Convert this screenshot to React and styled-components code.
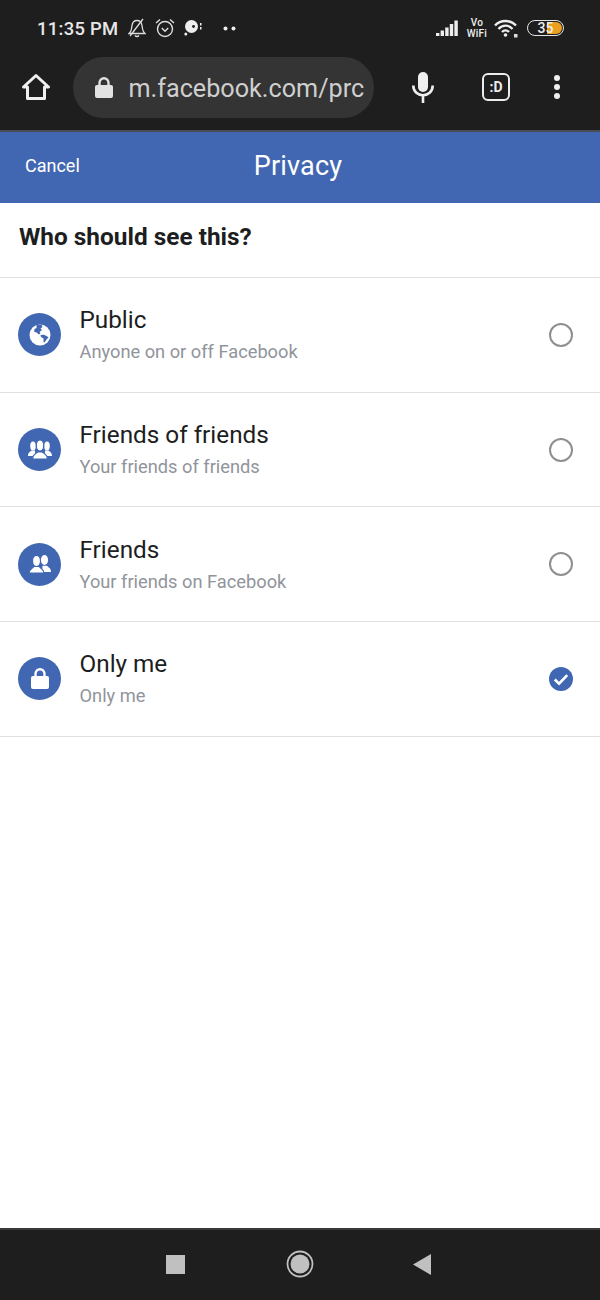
import React from 'react';
import styled, { createGlobalStyle } from 'styled-components';

const GlobalStyle = createGlobalStyle`
  html, body {
    margin: 0;
    padding: 0;
    background: #fff;
  }
  * {
    box-sizing: border-box;
  }
`;

const Page = styled.div`
  width: 600px;
  height: 1300px;
  display: flex;
  flex-direction: column;
  font-family: Roboto, 'Liberation Sans', sans-serif;
  background: #fff;
  overflow: hidden;
`;

const Chrome = styled.div`
  height: 132px;
  background: #1e1e1e;
  border-bottom: 2px solid #4a4d55;
  flex-shrink: 0;
`;

const StatusBar = styled.div`
  height: 56px;
  padding: 0 36px 0 37px;
  display: flex;
  align-items: center;
  justify-content: space-between;
  color: #e8e8e8;
`;

const StatusGroup = styled.div`
  display: flex;
  align-items: center;
`;

const Clock = styled.span`
  font-size: 18.4px;
  font-weight: 500;
  letter-spacing: 0.3px;
  margin-right: 10px;
`;

const StatusIcon = styled.svg`
  display: block;
  margin-right: ${p => p.$gap || 0}px;
  flex-shrink: 0;
`;

const VoWifi = styled.div`
  font-size: 10px;
  font-weight: 500;
  line-height: 11px;
  text-align: center;
  margin: 0 7px 0 8px;
  color: #eee;
  letter-spacing: 0.2px;
`;

const Battery = styled.div`
  width: 37px;
  height: 16px;
  margin-left: 9px;
  border: 1.5px solid #e4e4e4;
  border-radius: 8px;
  display: flex;
  align-items: center;
  justify-content: center;
  position: relative;
  overflow: hidden;
  font-size: 14px;
  font-weight: 500;
  color: #eee;
`;

const BatteryFill = styled.div`
  position: absolute;
  top: 1px;
  bottom: 1px;
  left: 19px;
  width: 15px;
  background: #e9a020;
  border-radius: 0 6px 6px 0;
`;

const BatteryText = styled.span`
  position: relative;
`;

const Toolbar = styled.div`
  height: 74px;
  padding: 0 0 12px 22px;
  display: flex;
  align-items: center;
`;

const UrlPill = styled.div`
  width: 301px;
  height: 61px;
  margin-left: 23px;
  margin-right: 38px;
  padding: 0 0 0 22px;
  border-radius: 31px;
  background: #343434;
  display: flex;
  align-items: center;
  flex-shrink: 0;
`;

const UrlText = styled.span`
  margin-left: 15.5px;
  margin-top: 3px;
  font-size: 25.2px;
  color: #cfcfcf;
  white-space: nowrap;
`;

const ToolIcons = styled.div`
  display: flex;
  align-items: center;
`;

const TabBadge = styled.div`
  width: 28px;
  height: 28px;
  margin: 0 43px 0 48px;
  border: 2.5px solid #ececec;
  border-radius: 6px;
  display: flex;
  align-items: center;
  justify-content: center;
  color: #ececec;
  font-size: 14px;
  font-weight: 700;
  flex-shrink: 0;
`;

const HeaderBar = styled.header`
  height: 71px;
  background: #4267b2;
  display: grid;
  grid-template-columns: 1fr auto 1fr;
  align-items: center;
  padding: 0 25px 3px 25px;
  color: #fff;
  flex-shrink: 0;
`;

const Cancel = styled.span`
  font-size: 18px;
  margin-bottom: 2px;
`;

const Title = styled.h1`
  margin: 0 4px 0 0;
  font-size: 27px;
  font-weight: 400;
  letter-spacing: 0.2px;
`;

const Question = styled.div`
  height: 75px;
  padding: 0 0 7px 19px;
  display: flex;
  align-items: center;
  font-size: 24.4px;
  font-weight: 700;
  color: #1c1e21;
  border-bottom: 1.5px solid #e1e1e1;
  flex-shrink: 0;
`;

const Row = styled.div`
  height: 114.7px;
  padding: 0 27px 0 18px;
  display: flex;
  align-items: center;
  border-bottom: 1.5px solid #e1e1e1;
  flex-shrink: 0;
`;

const Badge = styled.div`
  width: 43px;
  height: 43px;
  border-radius: 50%;
  background: #4267b2;
  display: flex;
  align-items: center;
  justify-content: center;
  flex-shrink: 0;
`;

const RowText = styled.div`
  flex: 1;
  margin-left: 18.5px;
`;

const RowTitle = styled.div`
  font-size: 24.3px;
  line-height: 32px;
  color: #1c1e21;
`;

const RowSub = styled.div`
  margin-top: 3px;
  font-size: 18.25px;
  line-height: 26px;
  color: #90949c;
`;

const Radio = styled.div`
  width: 24px;
  height: 24px;
  border-radius: 50%;
  border: 2.5px solid #8f8f8f;
  flex-shrink: 0;
`;

const CheckMark = styled.svg`
  display: block;
  flex-shrink: 0;
`;

const Spacer = styled.div`
  flex: 1;
`;

const NavBar = styled.nav`
  height: 72px;
  background: #1e1e1e;
  border-top: 2px solid #3a3a3a;
  display: flex;
  align-items: center;
  padding: 0 0 2px 166px;
  flex-shrink: 0;
`;

const NavSquare = styled.div`
  width: 19px;
  height: 19px;
  background: #c0c0c0;
  margin-right: 101px;
`;

const NavBack = styled.svg`
  display: block;
  margin-left: 99px;
`;

const GlobeIcon = () => (
  <svg width="22" height="22" viewBox="0 0 22 22">
    <circle cx="11" cy="11" r="10.5" fill="#fff" />
    <path
      d="M7.5 1 L12.5 0.8 L13.5 3 L11.5 4.5 L13 6 L10.5 8 L11.5 9.5 L10 10.5 L7.5 8.5 L5 7.5 L5.5 5 L7.5 4Z"
      fill="#4267b2"
    />
    <path
      d="M11.5 11 L15 10.8 L18 12.2 L19.5 13.5 L17.5 15.5 L15.5 18.5 L14.5 18 L14.5 14.5 L12 13Z"
      fill="#4267b2"
    />
  </svg>
);

const GroupIcon = () => (
  <svg width="24" height="19" viewBox="0 0 24 19" fill="#fff">
    <ellipse cx="5" cy="6" rx="2.8" ry="4.5" />
    <ellipse cx="19" cy="6" rx="2.8" ry="4.5" />
    <path d="M0 16 C0 12.5 2 12 3.5 10.5 L7 10.5 L7 16Z" />
    <path d="M24 16 C24 12.5 22 12 20.5 10.5 L17 10.5 L17 16Z" />
    <ellipse cx="12" cy="5.5" rx="3.7" ry="5.5" stroke="#4267b2" strokeWidth="1.2" />
    <path
      d="M4.5 19 C4.5 14.5 7.5 14 9.5 12 L14.5 12 C16.5 14 19.5 14.5 19.5 19Z"
      stroke="#4267b2"
      strokeWidth="1.2"
    />
  </svg>
);

const PairIcon = () => (
  <svg width="22" height="18" viewBox="0 0 22 18" fill="#fff">
    <ellipse cx="15.5" cy="5" rx="3.6" ry="5" />
    <path d="M13 17 L22 17 C22 13 19.5 12.5 18 10.8 L13.5 10.8Z" />
    <ellipse cx="7.5" cy="6" rx="4" ry="5.5" stroke="#4267b2" strokeWidth="1.2" />
    <path
      d="M0 18 C0 14 3 14 5 11.5 L10 11.5 C12 14 15 14 15 18Z"
      stroke="#4267b2"
      strokeWidth="1.2"
    />
  </svg>
);

const LockIcon = ({ color = '#fff' }) => (
  <svg width="18" height="21" viewBox="0 0 18 21">
    <path d="M4.5 9 V6 a4.5 4.8 0 0 1 9 0 V9" fill="none" stroke={color} strokeWidth="2.4" />
    <rect x="0" y="8" width="18" height="13" rx="2" fill={color} />
  </svg>
);

const CheckedRadio = () => (
  <CheckMark width="24" height="24" viewBox="0 0 25 25">
    <circle cx="12.5" cy="12.5" r="12.5" fill="#4267b2" />
    <path d="M6 13 L10.5 17.3 L19 8.5" fill="none" stroke="#fff" strokeWidth="2.8" />
  </CheckMark>
);

const options = [
  { title: 'Public', sub: 'Anyone on or off Facebook', icon: <GlobeIcon /> },
  { title: 'Friends of friends', sub: 'Your friends of friends', icon: <GroupIcon /> },
  { title: 'Friends', sub: 'Your friends on Facebook', icon: <PairIcon /> },
  { title: 'Only me', sub: 'Only me', icon: <LockIcon />, checked: true }
];

export default function App() {
  return (
    <Page>
      <GlobalStyle />
      <Chrome>
        <StatusBar>
          <StatusGroup>
            <Clock>11:35 PM</Clock>
            {/* bell off */}
            <StatusIcon $gap={9} width="18" height="20" viewBox="0 0 18 20" fill="none" stroke="#ddd" strokeWidth="1.3">
              <path d="M1 15.5 H17 C14.5 13.5 14.5 11 14 7.5 C13.5 4 11 2.5 9 2.5 C7 2.5 4.5 4 4 7.5 C3.5 11 3.5 13.5 1 15.5Z" />
              <path d="M7 17.5 C8 18.8 10 18.8 11 17.5" />
              <path d="M15 1 L2 18" />
            </StatusIcon>
            {/* alarm */}
            <StatusIcon $gap={9} width="20" height="20" viewBox="0 0 20 20" fill="none" stroke="#ddd" strokeWidth="1.4">
              <circle cx="10" cy="11" r="7.5" />
              <path d="M6.8 10 L10 13.2 L13.2 10" />
              <path d="M1 5 L5 1.5 M19 5 L15 1.5" />
            </StatusIcon>
            {/* chat bubble */}
            <StatusIcon $gap={21} width="18" height="16" viewBox="0 0 18 16" fill="#eee">
              <circle cx="7.5" cy="6.5" r="6.5" />
              <circle cx="1.8" cy="14" r="1.5" />
              <circle cx="9.5" cy="6.5" r="1.4" fill="#1e1e1e" />
              <rect x="16" y="3" width="1.5" height="2.5" />
              <rect x="16" y="7" width="1.5" height="2.5" />
            </StatusIcon>
            <StatusIcon width="13" height="5" viewBox="0 0 13 5" fill="#eee">
              <circle cx="2.5" cy="2.5" r="2" />
              <circle cx="10.5" cy="2.5" r="2" />
            </StatusIcon>
          </StatusGroup>
          <StatusGroup>
            <StatusIcon width="23" height="16" viewBox="0 0 23 16" fill="#eee">
              <rect x="0" y="13" width="3.4" height="3" />
              <rect x="4.6" y="10.5" width="3.4" height="5.5" />
              <rect x="9.2" y="7.5" width="3.4" height="8.5" />
              <rect x="13.8" y="4" width="3.4" height="12" />
              <rect x="18.4" y="0.5" width="3.4" height="15.5" />
            </StatusIcon>
            <VoWifi>Vo<br />WiFi</VoWifi>
            <StatusIcon width="24" height="19" viewBox="0 0 24 19" fill="none" stroke="#eee" strokeWidth="2.4">
              <path d="M1 6.5 C6.5 0.5 16.5 0.5 22 6.5" />
              <path d="M4.5 10 C8.5 5.5 14.5 5.5 18.5 10" />
              <path d="M8 13 C10 11 13 11 15 13" />
              <circle cx="11.5" cy="16" r="1.8" fill="#eee" stroke="none" />
              <rect x="20" y="15" width="3.5" height="3.5" fill="#ddd" stroke="none" />
            </StatusIcon>
            <Battery>
              <BatteryFill />
              <BatteryText>35</BatteryText>
            </Battery>
          </StatusGroup>
        </StatusBar>
        <Toolbar>
          <svg width="28" height="28" viewBox="0 0 28 28" fill="none" stroke="#f0f0f0" strokeWidth="3" strokeLinejoin="round">
            <path d="M1.5 14 L14 2.5 L26.5 14 H22.5 V25.5 H5.5 V14Z" />
          </svg>
          <UrlPill>
            <LockIcon color="#e2e2e2" />
            <UrlText>m.facebook.com/prc</UrlText>
          </UrlPill>
          <ToolIcons>
            <svg width="22" height="31" viewBox="0 0 22 31" fill="none">
              <rect x="6" y="0" width="10" height="20" rx="5" fill="#efefef" />
              <path d="M1.3 13.5 C1.3 26.5 20.7 26.5 20.7 13.5" stroke="#efefef" strokeWidth="2.6" />
              <path d="M11 23 V31" stroke="#efefef" strokeWidth="2.6" />
            </svg>
            <TabBadge>:D</TabBadge>
            <svg width="8" height="26" viewBox="0 0 8 26" fill="#efefef">
              <circle cx="4" cy="4" r="3" />
              <circle cx="4" cy="13" r="3" />
              <circle cx="4" cy="22" r="3" />
            </svg>
          </ToolIcons>
        </Toolbar>
      </Chrome>
      <HeaderBar>
        <Cancel>Cancel</Cancel>
        <Title>Privacy</Title>
      </HeaderBar>
      <Question>Who should see this?</Question>
      {options.map(option => (
        <Row key={option.title}>
          <Badge>{option.icon}</Badge>
          <RowText>
            <RowTitle>{option.title}</RowTitle>
            <RowSub>{option.sub}</RowSub>
          </RowText>
          {option.checked ? <CheckedRadio /> : <Radio />}
        </Row>
      ))}
      <Spacer />
      <NavBar>
        <NavSquare />
        <svg width="28" height="28" viewBox="0 0 28 28">
          <circle cx="14" cy="14" r="12.5" fill="none" stroke="#c0c0c0" strokeWidth="1.8" />
          <circle cx="14" cy="14" r="9.5" fill="#c0c0c0" />
        </svg>
        <NavBack width="19" height="21" viewBox="0 0 19 21">
          <path d="M0 10.5 L18 0 V21Z" fill="#c0c0c0" />
        </NavBack>
      </NavBar>
    </Page>
  );
}
